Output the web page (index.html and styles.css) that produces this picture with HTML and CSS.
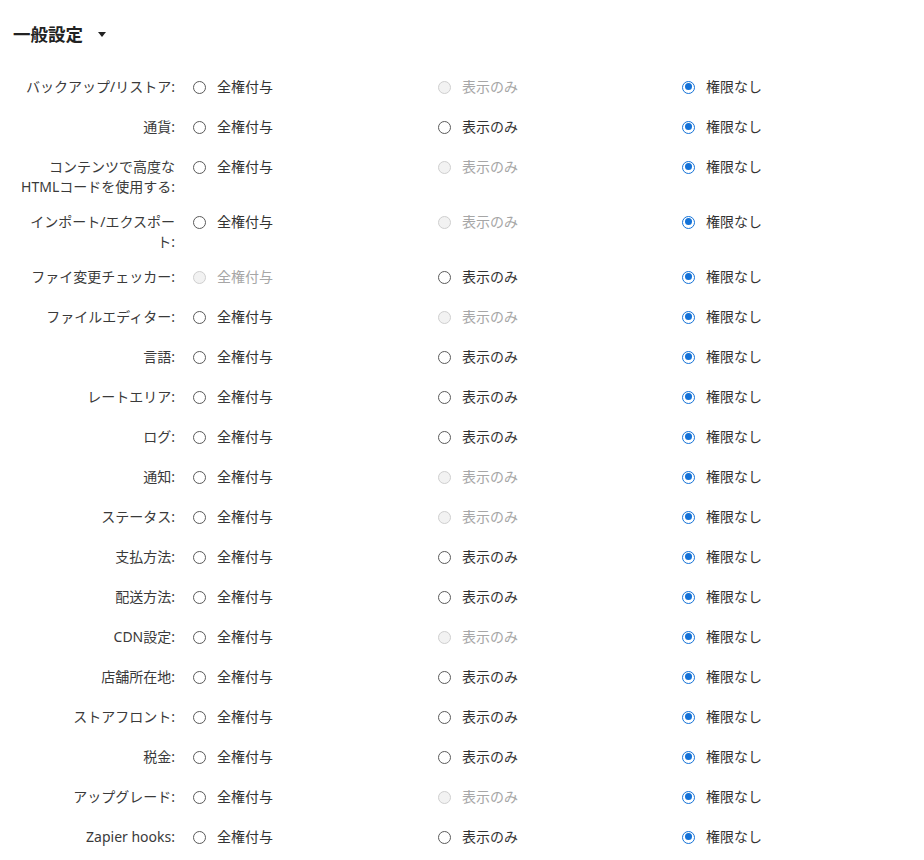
FILE: index.html
```html
<!DOCTYPE html>
<html lang="ja">
<head>
<meta charset="utf-8">
<link rel="stylesheet" href="styles.css">
</head>
<body>
<div class="page">
  <h2 class="section-title">一般設定 <span class="caret"></span></h2>
  <div class="perm-grid">
    <div class="row"><div class="label">バックアップ/リストア:</div><div class="opt"><span class="radio"></span>全権付与</div><div class="opt disabled"><span class="radio"></span>表示のみ</div><div class="opt"><span class="radio checked"></span>権限なし</div></div>
    <div class="row"><div class="label">通貨:</div><div class="opt"><span class="radio"></span>全権付与</div><div class="opt"><span class="radio"></span>表示のみ</div><div class="opt"><span class="radio checked"></span>権限なし</div></div>
    <div class="row"><div class="label">コンテンツで高度なHTMLコードを使用する:</div><div class="opt"><span class="radio"></span>全権付与</div><div class="opt disabled"><span class="radio"></span>表示のみ</div><div class="opt"><span class="radio checked"></span>権限なし</div></div>
    <div class="row"><div class="label">インポート/エクスポート:</div><div class="opt"><span class="radio"></span>全権付与</div><div class="opt disabled"><span class="radio"></span>表示のみ</div><div class="opt"><span class="radio checked"></span>権限なし</div></div>
    <div class="row"><div class="label">ファイ変更チェッカー:</div><div class="opt disabled"><span class="radio"></span>全権付与</div><div class="opt"><span class="radio"></span>表示のみ</div><div class="opt"><span class="radio checked"></span>権限なし</div></div>
    <div class="row"><div class="label">ファイルエディター:</div><div class="opt"><span class="radio"></span>全権付与</div><div class="opt disabled"><span class="radio"></span>表示のみ</div><div class="opt"><span class="radio checked"></span>権限なし</div></div>
    <div class="row"><div class="label">言語:</div><div class="opt"><span class="radio"></span>全権付与</div><div class="opt"><span class="radio"></span>表示のみ</div><div class="opt"><span class="radio checked"></span>権限なし</div></div>
    <div class="row"><div class="label">レートエリア:</div><div class="opt"><span class="radio"></span>全権付与</div><div class="opt"><span class="radio"></span>表示のみ</div><div class="opt"><span class="radio checked"></span>権限なし</div></div>
    <div class="row"><div class="label">ログ:</div><div class="opt"><span class="radio"></span>全権付与</div><div class="opt"><span class="radio"></span>表示のみ</div><div class="opt"><span class="radio checked"></span>権限なし</div></div>
    <div class="row"><div class="label">通知:</div><div class="opt"><span class="radio"></span>全権付与</div><div class="opt disabled"><span class="radio"></span>表示のみ</div><div class="opt"><span class="radio checked"></span>権限なし</div></div>
    <div class="row"><div class="label">ステータス:</div><div class="opt"><span class="radio"></span>全権付与</div><div class="opt disabled"><span class="radio"></span>表示のみ</div><div class="opt"><span class="radio checked"></span>権限なし</div></div>
    <div class="row"><div class="label">支払方法:</div><div class="opt"><span class="radio"></span>全権付与</div><div class="opt"><span class="radio"></span>表示のみ</div><div class="opt"><span class="radio checked"></span>権限なし</div></div>
    <div class="row"><div class="label">配送方法:</div><div class="opt"><span class="radio"></span>全権付与</div><div class="opt"><span class="radio"></span>表示のみ</div><div class="opt"><span class="radio checked"></span>権限なし</div></div>
    <div class="row"><div class="label">CDN設定:</div><div class="opt"><span class="radio"></span>全権付与</div><div class="opt disabled"><span class="radio"></span>表示のみ</div><div class="opt"><span class="radio checked"></span>権限なし</div></div>
    <div class="row"><div class="label">店舗所在地:</div><div class="opt"><span class="radio"></span>全権付与</div><div class="opt"><span class="radio"></span>表示のみ</div><div class="opt"><span class="radio checked"></span>権限なし</div></div>
    <div class="row"><div class="label">ストアフロント:</div><div class="opt"><span class="radio"></span>全権付与</div><div class="opt"><span class="radio"></span>表示のみ</div><div class="opt"><span class="radio checked"></span>権限なし</div></div>
    <div class="row"><div class="label">税金:</div><div class="opt"><span class="radio"></span>全権付与</div><div class="opt"><span class="radio"></span>表示のみ</div><div class="opt"><span class="radio checked"></span>権限なし</div></div>
    <div class="row"><div class="label">アップグレード:</div><div class="opt"><span class="radio"></span>全権付与</div><div class="opt disabled"><span class="radio"></span>表示のみ</div><div class="opt"><span class="radio checked"></span>権限なし</div></div>
    <div class="row"><div class="label">Zapier hooks:</div><div class="opt"><span class="radio"></span>全権付与</div><div class="opt"><span class="radio"></span>表示のみ</div><div class="opt"><span class="radio checked"></span>権限なし</div></div>
  </div>
</div>
</body>
</html>
```
FILE: styles.css
```css
html, body {
  margin: 0;
  padding: 0;
  background: #ffffff;
}
body {
  font-family: "Noto Sans", "Noto Sans CJK JP", sans-serif;
  color: #333333;
  font-size: 14px;
}
.page {
  padding: 22px 0 0 13px;
}
.section-title {
  margin: 0;
  font-size: 17.5px;
  line-height: 24px;
  font-weight: 700;
  color: #222222;
  display: flex;
  align-items: center;
  gap: 15px;
}
.caret {
  width: 0;
  height: 0;
  border-left: 4.5px solid transparent;
  border-right: 4.5px solid transparent;
  border-top: 5px solid #222222;
  margin-top: 1px;
}
.perm-grid {
  margin-top: 31px;
  display: flex;
  flex-direction: column;
  gap: 15px;
}
.row {
  display: grid;
  grid-template-columns: 180px 245px 244px 200px;
  min-height: 25px;
  align-items: start;
}
.label {
  box-sizing: border-box;
  padding: 0 18px 0 4px;
  text-align: right;
  line-height: 20px;
  color: #3a3a3a;
}
.opt {
  display: flex;
  align-items: center;
  height: 20px;
  line-height: 20px;
  color: #333333;
}
.opt.disabled {
  color: #a6a6a6;
}
.radio {
  box-sizing: border-box;
  width: 13px;
  height: 13px;
  border: 1px solid #5a5a5a;
  border-radius: 50%;
  margin-right: 11px;
  position: relative;
  flex: none;
}
.opt.disabled .radio {
  border-color: #cfcfcf;
  background: #f2f2f2;
}
.radio.checked {
  border: 1.5px solid #1372d8;
}
.radio.checked::after {
  content: "";
  position: absolute;
  left: 1.5px;
  top: 1.5px;
  width: 7px;
  height: 7px;
  border-radius: 50%;
  background: #1372d8;
}
```
